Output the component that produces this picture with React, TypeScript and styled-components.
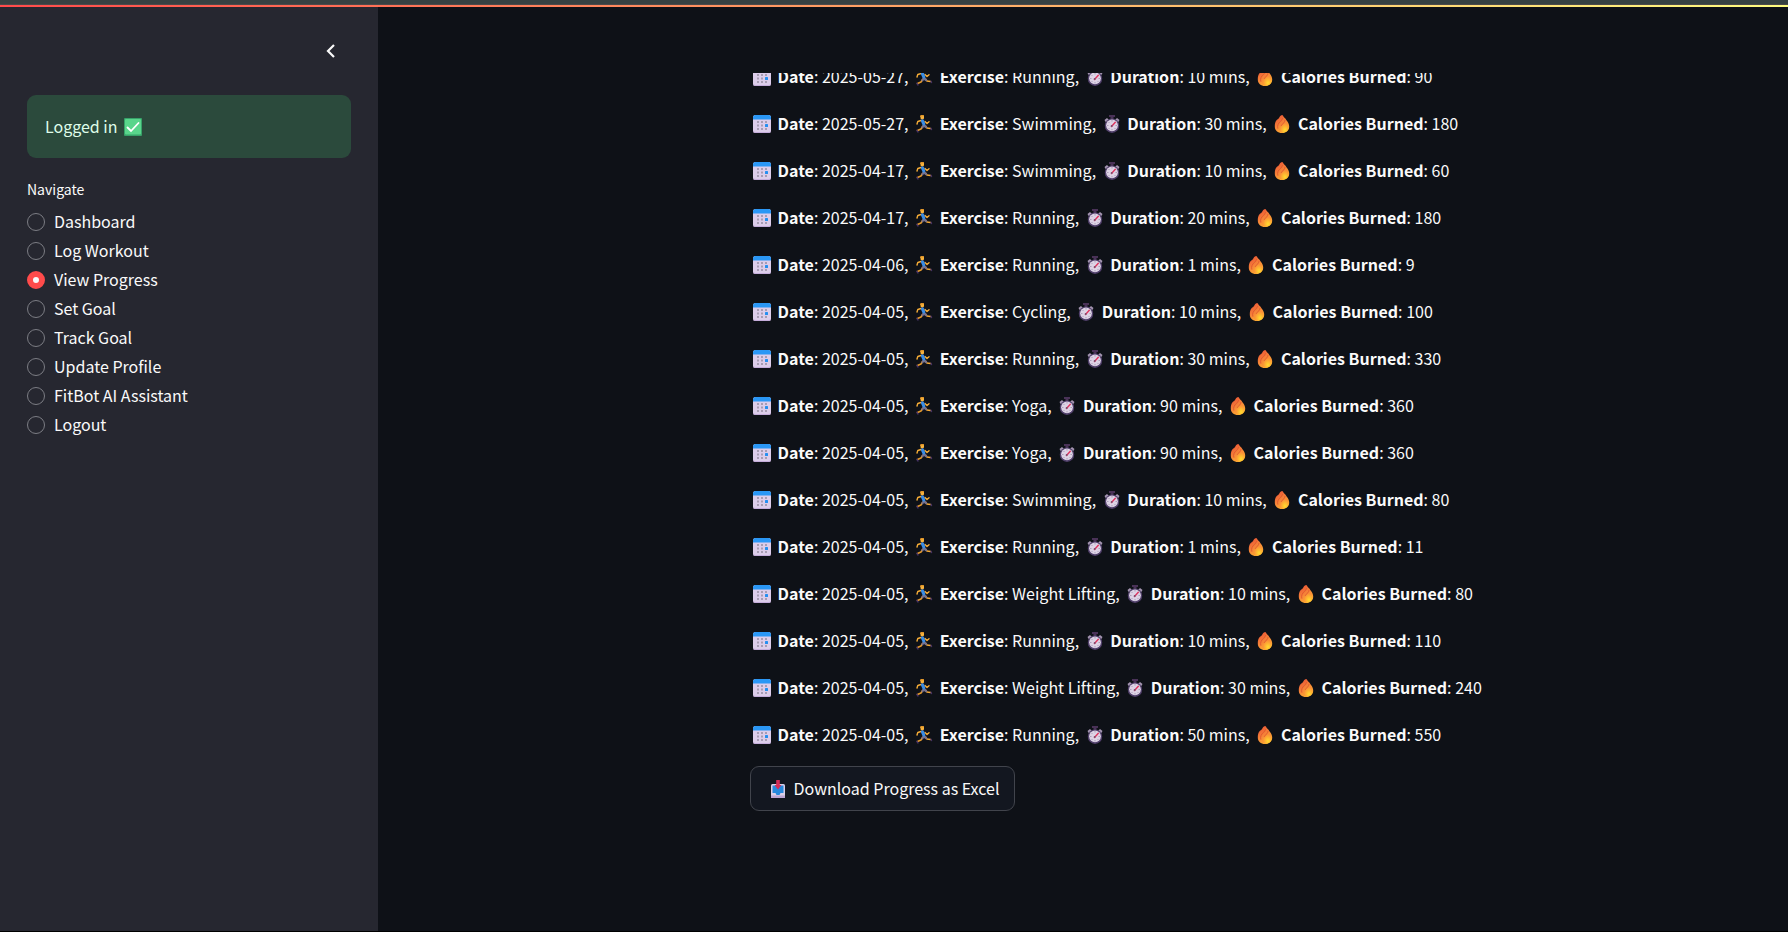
import React, { useState } from "react";
import styled, { createGlobalStyle } from "styled-components";

const GlobalStyle = createGlobalStyle`
  *, *::before, *::after { box-sizing: border-box; }
  body {
    margin: 0;
    background: #0e1117;
    color: #fafafa;
    font-family: "Noto Sans CJK JP", "Noto Sans", sans-serif;
    font-size: 16px;
    line-height: 29px;
  }
`;

const Page = styled.div`
  min-height: 100vh;
  display: flex;
  flex-direction: column;
  border-bottom: 1px solid #000;
`;

const TopStrip = styled.div`
  height: 5px;
  background: #364142;
  border-bottom: 1px solid #4b4a4b;
`;

const Decoration = styled.div`
  height: 2px;
  background: linear-gradient(90deg, #ff4b4b, #fffd80);
`;

const Body = styled.div`
  flex: 1;
  display: flex;
`;

const Sidebar = styled.aside`
  flex: 0 0 378px;
  padding: 0 27px;
  background: #262730;
`;

const SidebarHeader = styled.div`
  height: 88px;
  display: flex;
  justify-content: flex-end;
  align-items: flex-start;
  padding-top: 30px;
  padding-right: 7px;
`;

const CollapseButton = styled.button`
  width: 27px;
  height: 27px;
  display: grid;
  place-items: center;
  padding: 0;
  border: 0;
  background: none;
  color: #fafafa;
  cursor: pointer;
`;

const Success = styled.div`
  padding: 17px 18px;
  border-radius: 9px;
  background: #2b4a3c;
  color: #dffde9;
`;

const RadioGroup = styled.fieldset`
  margin: 17px 0 0;
  padding: 0;
  border: 0;
`;

const Legend = styled.legend`
  padding: 0;
  margin-bottom: 3px;
  font-size: 14px;
`;

const Option = styled.label`
  display: flex;
  align-items: center;
  gap: 9px;
  cursor: pointer;
`;

const Radio = styled.input`
  appearance: none;
  width: 18px;
  height: 18px;
  margin: 0;
  border: 1px solid #7c7d84;
  border-radius: 50%;
  background: #262730;

  &:checked {
    border: 6px solid #ff4b4b;
    background: #fafafa;
  }
`;

const Main = styled.main`
  flex: 1;
  min-width: 0;
  display: grid;
  grid-template-columns: 1fr 3fr;
  column-gap: 18px;
  align-content: start;
  padding: 66px 12px 0;
`;

const Content = styled.section`
  grid-column: 2;
  overflow: hidden;
`;

const History = styled.ul`
  display: flex;
  flex-direction: column;
  gap: 18px;
  margin: -11px 0 17px;
  padding: 0;
  list-style: none;
`;

const Term = styled.strong`
  font-weight: 700;
`;

const DownloadButton = styled.button`
  height: 45px;
  padding: 0 15px;
  border: 1px solid #41444c;
  border-radius: 9px;
  background: #131720;
  color: #fafafa;
  font: inherit;
  cursor: pointer;
`;

const Glyph = styled.svg`
  width: 18px;
  height: 18px;
  margin: 0 3px;
  vertical-align: -3px;
`;

const CalendarIcon = () => (
  <Glyph viewBox="0 0 18 18" aria-hidden="true">
    <rect width="18" height="18" rx="2.5" fill="#dccdea" />
    <path d="M0 4.500V2.500A2.500 2.500 0 0 1 2.500 0h13A2.500 2.500 0 0 1 18 2.500v2z" fill="#2a97f5" />
    <path d="M0 15v.5A2.500 2.500 0 0 0 2.500 18h13a2.500 2.500 0 0 0 2.500-2.500V15c0 1.200-1 2-2.500 2h-13C1 17 0 16.200 0 15z" fill="#c5addb" />
    <path
      d="M4 6h2v2H4zM8 6h2v2H8zM12 6h2v2h-2zM4 9.500h2v2H4zM8 9.500h2v2H8zM4 13h2v2H4zM8 13h2v2H8zM12 13h2v2h-2z"
      fill="#a79db3"
    />
    <rect x="12" y="9" width="3" height="3" rx=".5" fill="#258ff0" />
  </Glyph>
);

const RunnerIcon = () => (
  <Glyph viewBox="0 0 18 18" aria-hidden="true">
    <g fill="none" strokeLinecap="round" strokeLinejoin="round">
      <path d="M7.500 11.500 6 14 2.500 15.500" stroke="#e69a2c" strokeWidth="1.500" />
      <path d="M10.500 11 12 13 15.500 13.500" stroke="#f5a934" strokeWidth="1.500" />
      <path d="M6 5.500 2.800 6.500 2 9M10 6.500 12 8.500 14 6.800" stroke="#f6ad38" strokeWidth="1.400" />
      <path d="M8.500 10.500 7.500 12.300M9 10.500 11 12" stroke="#77718c" strokeWidth="2.200" />
      <path d="M7.500 5.800 8.800 9" stroke="#3a8ce3" strokeWidth="3.200" />
      <path d="M1.800 15.300 3 17M16 13.200 16.500 14.500" stroke="#453264" strokeWidth="1.400" />
    </g>
    <rect x="5.500" y="0" width="3.500" height="4.300" rx="1.300" fill="#f8b33d" />
    <path d="M5 2C4.700.5 6 0 7 0c1.500 0 2 .5 2 1L6.500 1.500z" fill="#e3972a" />
  </Glyph>
);

const StopwatchIcon = () => (
  <Glyph viewBox="0 0 18 18" aria-hidden="true">
    <path d="M6 0h6v2h-1.500v3h-3V2H6z" fill="#493257" />
    <path d="M1.500 5 4 3 6 5 3 7.500zM16.500 5 14 3 12 5l3 2.500z" fill="#a596b2" />
    <circle cx="9" cy="10.700" r="7.200" fill="#51406b" />
    <circle cx="9" cy="10.300" r="5.900" fill="#ddd3e5" />
    <path
      d="M9 5v1.500M9 14v1.500M4 10.500h1.500M12.500 10.500H14M5.500 7l1 1M12.500 14l-1-1M5.500 14l1-1"
      stroke="#a799b5"
      strokeWidth=".9"
    />
    <path d="M8.500 11.500 12.300 7.300" stroke="#df3560" strokeWidth="1.400" strokeLinecap="round" />
    <circle cx="8.700" cy="11" r="1" fill="#7b5070" />
  </Glyph>
);

const FlameIcon = () => (
  <Glyph viewBox="0 0 18 18" aria-hidden="true">
    <defs>
      <linearGradient id="flame" x1="0" y1="0" x2="0.6" y2="1">
        <stop offset="0.1" stopColor="#ea5136" />
        <stop offset="0.6" stopColor="#f78a38" />
        <stop offset="1" stopColor="#ffb52d" />
      </linearGradient>
      <radialGradient id="ember" cx="0.6" cy="0.75" r="0.6">
        <stop offset="0.1" stopColor="#ffd42f" />
        <stop offset="1" stopColor="#fb8c36" />
      </radialGradient>
    </defs>
    <path
      d="M9 0c1 0 1.200 1.200 2 2.300.6.800 1.500 1.200 2 2.200.5 1 1.300 1.500 1.900 2.700.8 1.500 1.300 2.800 1.300 4.300 0 4-3 6.500-7.200 6.500s-7.200-2.500-7.200-6.500c0-2.300.3-4.500 1.500-6C4.300 4.200 5.200 4.500 6 3 6.800 1.800 7.500.2 9 0z"
      fill="url(#flame)"
    />
    <path
      d="M12.500 6.500c-.5 1.500-1.500 2.500-3 3.700-2 1.600-3 2.800-3 4.500 0 1.200.7 2.300 2 3.100 4 .4 7.200-2.100 7.200-6 0-2-1.200-4-3.200-5.300z"
      fill="url(#ember)"
    />
    <path
      d="M9.500 3.500C9 6 6 7 5 9.500c-.5 1.200-.5 2.500-.2 3.800M12 5.500c0 2-2.500 3-3.700 5"
      fill="none"
      stroke="#dc4f2f"
      strokeWidth=".8"
      strokeLinecap="round"
    />
  </Glyph>
);

const CheckIcon = () => (
  <Glyph viewBox="0 0 18 18" aria-hidden="true">
    <rect width="18" height="18" rx="1" fill="#37a269" />
    <rect x="1" y="1" width="16" height="15.500" rx="1" fill="#59d58b" />
    <path d="M3.500 9.500 7 13 14.500 5" fill="none" stroke="#fff" strokeWidth="1.800" strokeLinecap="round" />
  </Glyph>
);

const InboxIcon = () => (
  <Glyph viewBox="0 0 18 18" aria-hidden="true">
    <path d="M2 5.500A1.500 1.500 0 0 1 3.500 4h11A1.500 1.500 0 0 1 16 5.500V18H2z" fill="#dccfe8" />
    <path d="M3.500 5.500h11v7.500h-3l-1 2h-3l-1-2h-3z" fill="#2788dc" />
    <path d="M2 15.500h14V18H2z" fill="#bda6d3" />
    <path d="M7.200 0h3.600v5h1.700L9 9.500 5.500 5h1.700z" fill="#d42c57" />
  </Glyph>
);

const pages = [
  "Dashboard",
  "Log Workout",
  "View Progress",
  "Set Goal",
  "Track Goal",
  "Update Profile",
  "FitBot AI Assistant",
  "Logout",
];

interface Workout {
  date: string;
  exercise: string;
  minutes: number;
  calories: number;
}

const workouts: Workout[] = [
  { date: "2025-05-27", exercise: "Running", minutes: 10, calories: 90 },
  { date: "2025-05-27", exercise: "Swimming", minutes: 30, calories: 180 },
  { date: "2025-04-17", exercise: "Swimming", minutes: 10, calories: 60 },
  { date: "2025-04-17", exercise: "Running", minutes: 20, calories: 180 },
  { date: "2025-04-06", exercise: "Running", minutes: 1, calories: 9 },
  { date: "2025-04-05", exercise: "Cycling", minutes: 10, calories: 100 },
  { date: "2025-04-05", exercise: "Running", minutes: 30, calories: 330 },
  { date: "2025-04-05", exercise: "Yoga", minutes: 90, calories: 360 },
  { date: "2025-04-05", exercise: "Yoga", minutes: 90, calories: 360 },
  { date: "2025-04-05", exercise: "Swimming", minutes: 10, calories: 80 },
  { date: "2025-04-05", exercise: "Running", minutes: 1, calories: 11 },
  { date: "2025-04-05", exercise: "Weight Lifting", minutes: 10, calories: 80 },
  { date: "2025-04-05", exercise: "Running", minutes: 10, calories: 110 },
  { date: "2025-04-05", exercise: "Weight Lifting", minutes: 30, calories: 240 },
  { date: "2025-04-05", exercise: "Running", minutes: 50, calories: 550 },
];

const WorkoutRow = ({ date, exercise, minutes, calories }: Workout) => (
  <li>
    <CalendarIcon /> <Term>Date</Term>: {date}, <RunnerIcon /> <Term>Exercise</Term>: {exercise},{" "}
    <StopwatchIcon /> <Term>Duration</Term>: {minutes} mins, <FlameIcon />{" "}
    <Term>Calories Burned</Term>: {calories}
  </li>
);

export default function App() {
  const [page, setPage] = useState("View Progress");

  return (
    <Page>
      <GlobalStyle />
      <TopStrip />
      <Decoration />
      <Body>
        <Sidebar>
          <SidebarHeader>
            <CollapseButton aria-label="Collapse sidebar">
              <svg width="10" height="14" viewBox="0 0 10 14" aria-hidden="true">
                <path d="M8 1 2 7l6 6" fill="none" stroke="currentColor" strokeWidth="2.2" />
              </svg>
            </CollapseButton>
          </SidebarHeader>
          <Success role="status">
            Logged in <CheckIcon />
          </Success>
          <RadioGroup>
            <Legend>Navigate</Legend>
            {pages.map((name) => (
              <Option key={name}>
                <Radio type="radio" name="page" checked={page === name} onChange={() => setPage(name)} />
                {name}
              </Option>
            ))}
          </RadioGroup>
        </Sidebar>
        <Main>
          <Content>
            <History>
              {workouts.map((workout, index) => (
                <WorkoutRow key={index} {...workout} />
              ))}
            </History>
            <DownloadButton type="button">
              <InboxIcon /> Download Progress as Excel
            </DownloadButton>
          </Content>
        </Main>
      </Body>
    </Page>
  );
}
